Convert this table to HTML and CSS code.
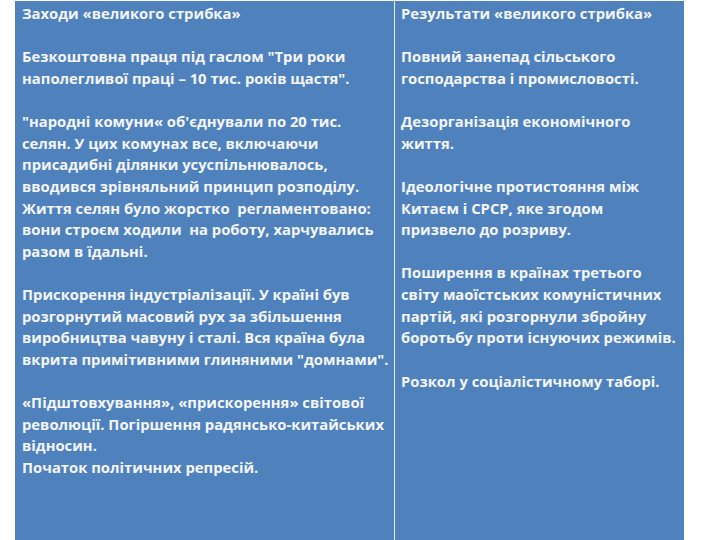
FILE: index.html
```html
<!DOCTYPE html>
<html lang="uk">
<head>
<meta charset="utf-8">
<title>Великий стрибок</title>
<link rel="stylesheet" href="styles.css">
</head>
<body>
<div class="panel">
  <div class="cell left">
    <p>Заходи «великого стрибка»</p>
    <p>Безкоштовна праця під гаслом "Три роки<br>наполегливої праці – 10 тис. років щастя".</p>
    <p>"народні комуни« об'єднували по 20 тис.<br>селян. У цих комунах все, включаючи<br>присадибні ділянки усуспільнювалось,<br>вводився зрівняльний принцип розподілу.<br>Життя селян було жорстко&nbsp; регламентовано:<br>вони строєм ходили&nbsp; на роботу, харчувались<br>разом в їдальні.</p>
    <p>Прискорення індустріалізації. У країні був<br>розгорнутий масовий рух за збільшення<br>виробництва чавуну і сталі. Вся країна була<br>вкрита примітивними глиняними "домнами".</p>
    <p class="tight">«Підштовхування», «прискорення» світової<br>революції. Погіршення радянсько-китайських<br>відносин.</p>
    <p>Початок політичних репресій.</p>
  </div>
  <div class="cell right">
    <p>Результати «великого стрибка»</p>
    <p>Повний занепад сільського<br>господарства і промисловості.</p>
    <p>Дезорганізація економічного<br>життя.</p>
    <p>Ідеологічне протистояння між<br>Китаєм і СРСР, яке згодом<br>призвело до розриву.</p>
    <p>Поширення в країнах третього<br>світу маоїстських комуністичних<br>партій, які розгорнули збройну<br>боротьбу проти існуючих режимів.</p>
    <p>Розкол у соціалістичному таборі.</p>
  </div>
</div>
</body>
</html>
```

FILE: styles.css
```css
html, body {
  margin: 0;
  padding: 0;
  background: #ffffff;
}
body {
  width: 720px;
  height: 540px;
  overflow: hidden;
}
.panel {
  margin: 1px 0 0 15px;
  width: 669px;
  height: 539px;
  background: #4f81bd;
  display: grid;
  grid-template-columns: 380px 289px;
}
.cell {
  font-family: "Open Sans", "Noto Sans", sans-serif;
  font-weight: bold;
  font-size: 14.8px;
  line-height: 21.62px;
  color: #f4f6fa;
  padding-top: 2px;
  white-space: nowrap;
  overflow: hidden;
}
.left {
  padding-left: 7px;
  border-right: 1px solid #e8eef6;
}
.right {
  padding-left: 6px;
}
.cell p {
  margin: 0 0 21.62px 0;
}
.cell p.tight {
  margin-bottom: 0;
}
```
